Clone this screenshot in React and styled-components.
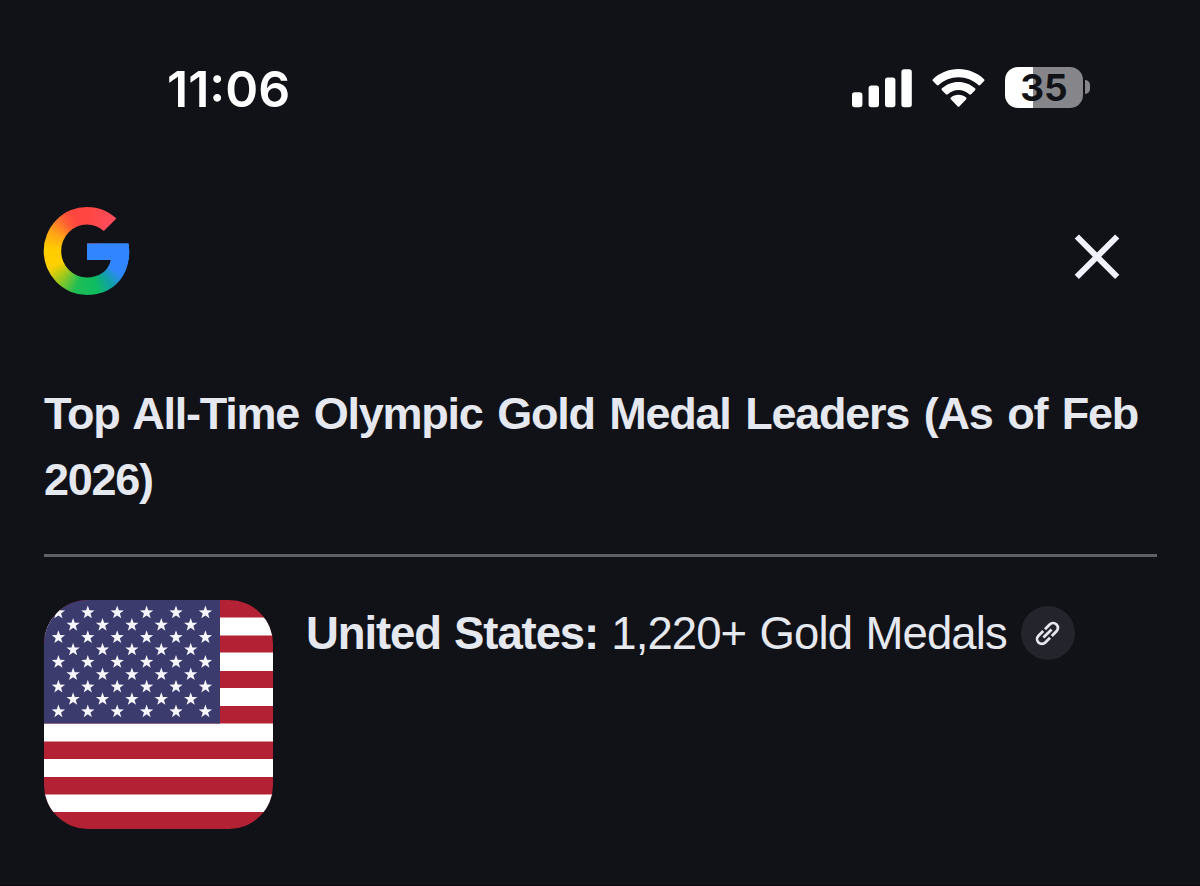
import React from "react";
import styled, { createGlobalStyle } from "styled-components";

/* =============== Styles =============== */
const GlobalStyle = createGlobalStyle`
  * {
    box-sizing: border-box;
  }

  body {
    margin: 0;
    background: #111217;
  }
`;

const Screen = styled.main`
  width: 1200px;
  height: 886px;
  overflow: hidden;
  background: #111217;
  border-bottom: 1px solid #0d0712;
  color: #e6e8f0;
  font-family: "Liberation Sans", Arial, sans-serif;
`;

const StatusBar = styled.header`
  display: flex;
  align-items: center;
  justify-content: space-between;
  height: 174px;
  padding: 0 110px 0 167px;
  color: #ffffff;
`;

const Time = styled.time`
  font-family: Inter, sans-serif;
  font-size: 50px;
  font-weight: 600;
  font-feature-settings: "calt" 1;
  line-height: 60px;
  margin-top: 4px;
`;

const StatusIcons = styled.div`
  display: flex;
  align-items: center;
  gap: 20px;
`;

const Battery = styled.div`
  display: flex;
  align-items: center;
  gap: 2px;
`;

const BatteryBody = styled.div`
  display: grid;
  place-items: center;
  width: 78px;
  height: 41px;
  padding-top: 1px;
  border-radius: 13px;
  background: linear-gradient(90deg, #ffffff ${(p) => p.$level}%, #86868a ${(p) => p.$level}%);
  color: #111217;
  font-family: Inter, sans-serif;
  font-size: 37px;
  font-weight: 700;
  line-height: 40px;
`;

const BatteryTip = styled.div`
  width: 5px;
  height: 14px;
  border-radius: 0 5px 5px 0;
  background: #86868a;
`;

const TopBar = styled.div`
  display: flex;
  align-items: flex-start;
  justify-content: space-between;
  height: 207px;
  padding: 33px 80px 0 43px;
`;

const GoogleMark = styled.div`
  width: 88px;
  height: 88px;
  clip-path: path("M73.4 11.5 L60.8 24.1 C56.2 19.7 50.5 17.5 44 17.5 A25.8 26.5 0 0 0 44 70.5 C49.9 70.5 55 69 58.9 66.3 C63.6 63.2 66.7 58.5 67.7 53 L44 53 V36.5 H85.4 C86 39.2 86.2 41.9 86.2 45 C86.2 58.4 81.4 69.7 73.1 77.3 C65.8 84.1 55.9 88 44 88 A43.3 44 0 0 1 44 0 C55.9 0 65.8 4.4 73.4 11.5 Z");
  background:
    linear-gradient(#3186ff, #3186ff) 43px 36px / 45px 17px no-repeat,
    conic-gradient(
      #ff4641 0deg,
      #ff4c5f 45deg,
      #3186ff 70deg,
      #3186ff 124deg,
      #12a0a8 144deg,
      #0ebc5f 166deg,
      #1ebd56 196deg,
      #a0c91c 224deg,
      #ffd000 246deg,
      #ffcc00 274deg,
      #ffa018 300deg,
      #ff5a36 326deg,
      #ff4641 340deg,
      #ff4641 360deg
    );
`;

const CloseButton = styled.button`
  display: flex;
  margin-top: 27px;
  padding: 0;
  border: 0;
  background: none;
  color: #f0f1fc;
`;

const Content = styled.section`
  margin: 0 43px 0 44px;
`;

const Title = styled.h1`
  margin: 0;
  padding-bottom: 42px;
  border-bottom: 3px solid #5f6065;
  font-size: 45px;
  font-weight: 700;
  line-height: 65.5px;
  letter-spacing: -1.25px;
  word-spacing: 3.4px;
`;

const MedalRow = styled.article`
  display: flex;
  align-items: flex-start;
  margin-top: 43px;
`;

const Flag = styled.svg`
  flex: none;
  width: 229px;
  height: 229px;
  border-radius: 44px;
`;

const MedalText = styled.p`
  display: flex;
  align-items: flex-start;
  margin: 6px 0 0 33px;
  font-size: 45.5px;
  line-height: 56px;
  letter-spacing: -0.9px;
  word-spacing: 1.6px;
  white-space: pre;
`;

const Country = styled.strong`
  font-weight: 700;
  letter-spacing: -1.1px;
`;

const Count = styled.span``;

const LinkChip = styled.span`
  display: grid;
  place-items: center;
  width: 54px;
  height: 54px;
  margin-left: 14px;
  border-radius: 50%;
  background: #24242d;
  color: #e6e8f0;
`;

/* =============== Icons =============== */
const SignalIcon = () => (
  <svg width="60" height="41" viewBox="0 -2 60 41" fill="#fff" aria-hidden>
    <rect x="0" y="23.3" width="10.4" height="15" rx="2.8" />
    <rect x="16.6" y="16.5" width="10.4" height="21.8" rx="2.8" />
    <rect x="33" y="8.4" width="10.4" height="29.9" rx="2.8" />
    <rect x="49.4" y="0.3" width="10.4" height="38" rx="2.8" />
  </svg>
);

const WifiIcon = () => (
  <svg width="53" height="41" viewBox="0 -1.5 53 41" fill="#fff" aria-hidden>
    <path d="M26.5.6C36.3.6 45.3 4.4 52 10.7c.6.6.6 1.3.1 1.9l-3.9 4c-.6.6-1.3.6-1.9 0C41 11.7 34.1 8.8 26.5 8.8S12 11.7 6.7 16.6c-.6.6-1.3.6-1.9 0l-3.9-4c-.5-.6-.5-1.3.1-1.9C7.7 4.4 16.7.6 26.5.6Z" />
    <path d="M26.5 13.4c6.3 0 12.1 2.4 16.5 6.4.6.6.6 1.3.1 1.9l-4 4c-.6.6-1.2.6-1.9.1-2.8-2.6-6.6-4.2-10.7-4.2s-7.9 1.6-10.7 4.2c-.7.5-1.3.5-1.9-.1l-4-4c-.5-.6-.5-1.3.1-1.9 4.4-4 10.2-6.4 16.5-6.4Z" />
    <path d="M26.5 26.2c2.9 0 5.5 1 7.6 2.7.6.5.6 1.2.1 1.8l-6.7 7c-.6.7-1.4.7-2 0l-6.7-7c-.5-.6-.5-1.3.1-1.8 2.1-1.7 4.7-2.7 7.600-2.700Z" />
  </svg>
);

const CloseIcon = () => (
  <svg width="46" height="46" viewBox="0 0 46 46" stroke="currentColor" strokeWidth="6" aria-hidden>
    <path d="M2.8 2.500 43.200 42.900M43.200 2.500 2.800 42.900" />
  </svg>
);

const LinkIcon = () => (
  <svg width="33" height="33" viewBox="0 0 24 24" fill="none" stroke="currentColor" strokeWidth="2" aria-hidden>
    <g transform="rotate(-45 12 12)">
      <path d="M11.1 8.5H6.25a3.5 3.5 0 0 0 0 7h4.85M12.9 8.5h4.85a3.5 3.5 0 0 1 0 7H12.9M7.8 12h8.4" />
    </g>
  </svg>
);

/* =============== Flag =============== */
const WHITE_STRIPES = [
  [17.5, 18],
  [52.5, 18.5],
  [88, 18],
  [123.5, 18],
  [159, 18],
  [194.5, 17.5],
];

const starPath = (cx, cy, r) => {
  const points = [];
  for (let i = 0; i < 10; i++) {
    const radius = i % 2 ? r * 0.4 : r;
    const angle = (Math.PI / 5) * i - Math.PI / 2;
    points.push(`${(cx + radius * Math.cos(angle)).toFixed(2)} ${(cy + radius * Math.sin(angle)).toFixed(2)}`);
  }
  return `M${points.join("L")}Z`;
};

const stars = [];
for (let row = 0; row < 9; row++) {
  const offset = row % 2;
  for (let col = 0; col < 6 - offset; col++) {
    stars.push(starPath(14.4 + offset * 14.7 + col * 29.4, 12.6 + row * 12.37, 7));
  }
}

const UsaFlag = () => (
  <Flag viewBox="0 0 229 229" role="img" aria-label="United States">
    <rect width="229" height="229" fill="#b22234" />
    {WHITE_STRIPES.map(([y, height]) => (
      <rect key={y} y={y} width="229" height={height} fill="#fff" />
    ))}
    <rect width="176" height="123.5" fill="#3c3b6e" />
    <path d={stars.join("")} fill="#f6f6ff" />
  </Flag>
);

/* =============== Component =============== */
const App = () => {
  return (
    <>
      <GlobalStyle />
      <Screen>
        <StatusBar>
          <Time>11:06</Time>
          <StatusIcons>
            <SignalIcon />
            <WifiIcon />
            <Battery>
              <BatteryBody $level={35.5}>35</BatteryBody>
              <BatteryTip />
            </Battery>
          </StatusIcons>
        </StatusBar>

        <TopBar>
          <GoogleMark role="img" aria-label="Google" />
          <CloseButton aria-label="Close">
            <CloseIcon />
          </CloseButton>
        </TopBar>

        <Content>
          <Title>Top All-Time Olympic Gold Medal Leaders (As of Feb 2026)</Title>
          <MedalRow>
            <UsaFlag />
            <MedalText>
              <Country>United States: </Country>
              <Count>1,220+ Gold Medals</Count>
              <LinkChip>
                <LinkIcon />
              </LinkChip>
            </MedalText>
          </MedalRow>
        </Content>
      </Screen>
    </>
  );
};

export default App;
